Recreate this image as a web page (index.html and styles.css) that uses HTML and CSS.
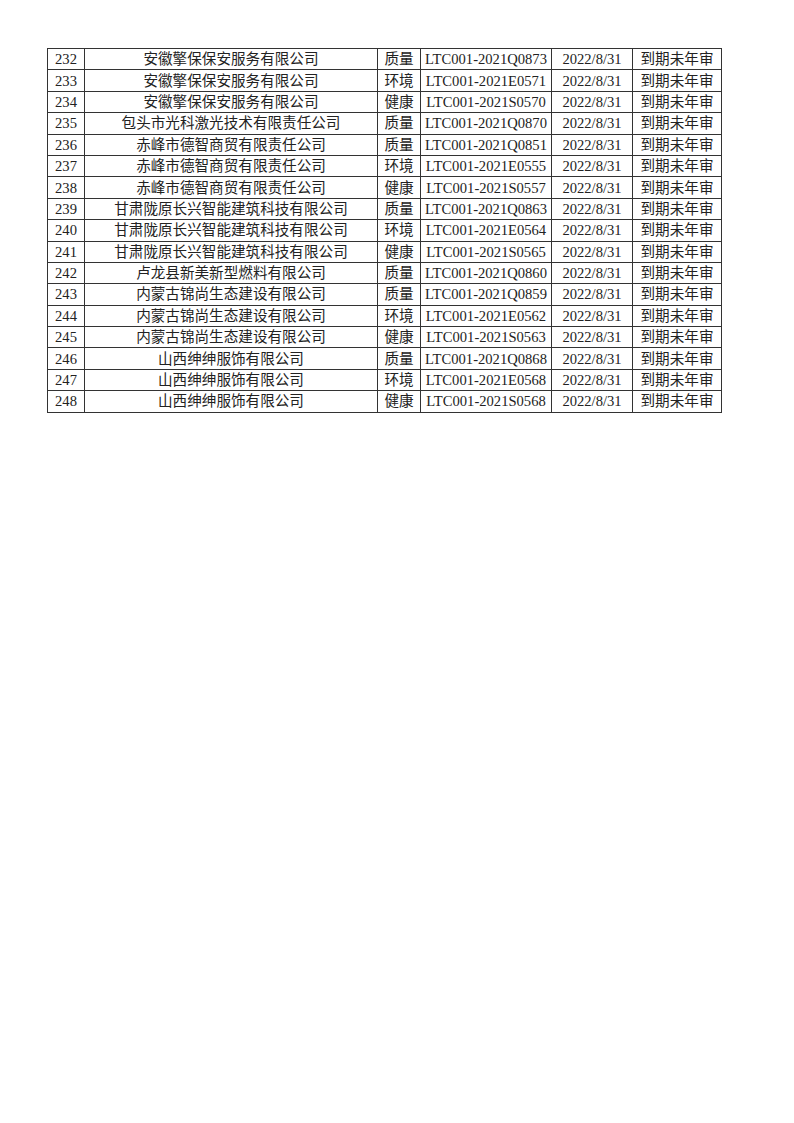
FILE: index.html
```html
<!DOCTYPE html>
<html lang="zh">
<head>
<meta charset="utf-8">
<link rel="stylesheet" href="styles.css">
</head>
<body>
<table class="list">
<colgroup>
<col class="c-no"><col class="c-name"><col class="c-type"><col class="c-code"><col class="c-date"><col class="c-status">
</colgroup>
<tbody>
<tr><td>232</td><td>安徽擎保保安服务有限公司</td><td>质量</td><td>LTC001-2021Q0873</td><td>2022/8/31</td><td>到期未年审</td></tr>
<tr><td>233</td><td>安徽擎保保安服务有限公司</td><td>环境</td><td>LTC001-2021E0571</td><td>2022/8/31</td><td>到期未年审</td></tr>
<tr><td>234</td><td>安徽擎保保安服务有限公司</td><td>健康</td><td>LTC001-2021S0570</td><td>2022/8/31</td><td>到期未年审</td></tr>
<tr><td>235</td><td>包头市光科激光技术有限责任公司</td><td>质量</td><td>LTC001-2021Q0870</td><td>2022/8/31</td><td>到期未年审</td></tr>
<tr><td>236</td><td>赤峰市德智商贸有限责任公司</td><td>质量</td><td>LTC001-2021Q0851</td><td>2022/8/31</td><td>到期未年审</td></tr>
<tr><td>237</td><td>赤峰市德智商贸有限责任公司</td><td>环境</td><td>LTC001-2021E0555</td><td>2022/8/31</td><td>到期未年审</td></tr>
<tr><td>238</td><td>赤峰市德智商贸有限责任公司</td><td>健康</td><td>LTC001-2021S0557</td><td>2022/8/31</td><td>到期未年审</td></tr>
<tr><td>239</td><td>甘肃陇原长兴智能建筑科技有限公司</td><td>质量</td><td>LTC001-2021Q0863</td><td>2022/8/31</td><td>到期未年审</td></tr>
<tr><td>240</td><td>甘肃陇原长兴智能建筑科技有限公司</td><td>环境</td><td>LTC001-2021E0564</td><td>2022/8/31</td><td>到期未年审</td></tr>
<tr><td>241</td><td>甘肃陇原长兴智能建筑科技有限公司</td><td>健康</td><td>LTC001-2021S0565</td><td>2022/8/31</td><td>到期未年审</td></tr>
<tr><td>242</td><td>卢龙县新美新型燃料有限公司</td><td>质量</td><td>LTC001-2021Q0860</td><td>2022/8/31</td><td>到期未年审</td></tr>
<tr><td>243</td><td>内蒙古锦尚生态建设有限公司</td><td>质量</td><td>LTC001-2021Q0859</td><td>2022/8/31</td><td>到期未年审</td></tr>
<tr><td>244</td><td>内蒙古锦尚生态建设有限公司</td><td>环境</td><td>LTC001-2021E0562</td><td>2022/8/31</td><td>到期未年审</td></tr>
<tr><td>245</td><td>内蒙古锦尚生态建设有限公司</td><td>健康</td><td>LTC001-2021S0563</td><td>2022/8/31</td><td>到期未年审</td></tr>
<tr><td>246</td><td>山西绅绅服饰有限公司</td><td>质量</td><td>LTC001-2021Q0868</td><td>2022/8/31</td><td>到期未年审</td></tr>
<tr><td>247</td><td>山西绅绅服饰有限公司</td><td>环境</td><td>LTC001-2021E0568</td><td>2022/8/31</td><td>到期未年审</td></tr>
<tr><td>248</td><td>山西绅绅服饰有限公司</td><td>健康</td><td>LTC001-2021S0568</td><td>2022/8/31</td><td>到期未年审</td></tr>
</tbody>
</table>
</body>
</html>
```
FILE: styles.css
```css
html, body {
  margin: 0;
  padding: 0;
  background: #ffffff;
}
body {
  padding: 48px 0 0 47px;
  font-family: "Liberation Serif", "Noto Sans CJK SC", serif;
  font-size: 14.6px;
  color: #222222;
}
.list {
  border-collapse: collapse;
  table-layout: fixed;
  width: 674px;
}
.c-no { width: 37px; }
.c-name { width: 293px; }
.c-type { width: 43px; }
.c-code { width: 131px; }
.c-date { width: 81px; }
.c-status { width: 89px; }
.list td {
  border: 1px solid #333333;
  height: 20.4px;
  padding: 0;
  text-align: center;
  line-height: 20px;
  white-space: nowrap;
  overflow: hidden;
}
```
